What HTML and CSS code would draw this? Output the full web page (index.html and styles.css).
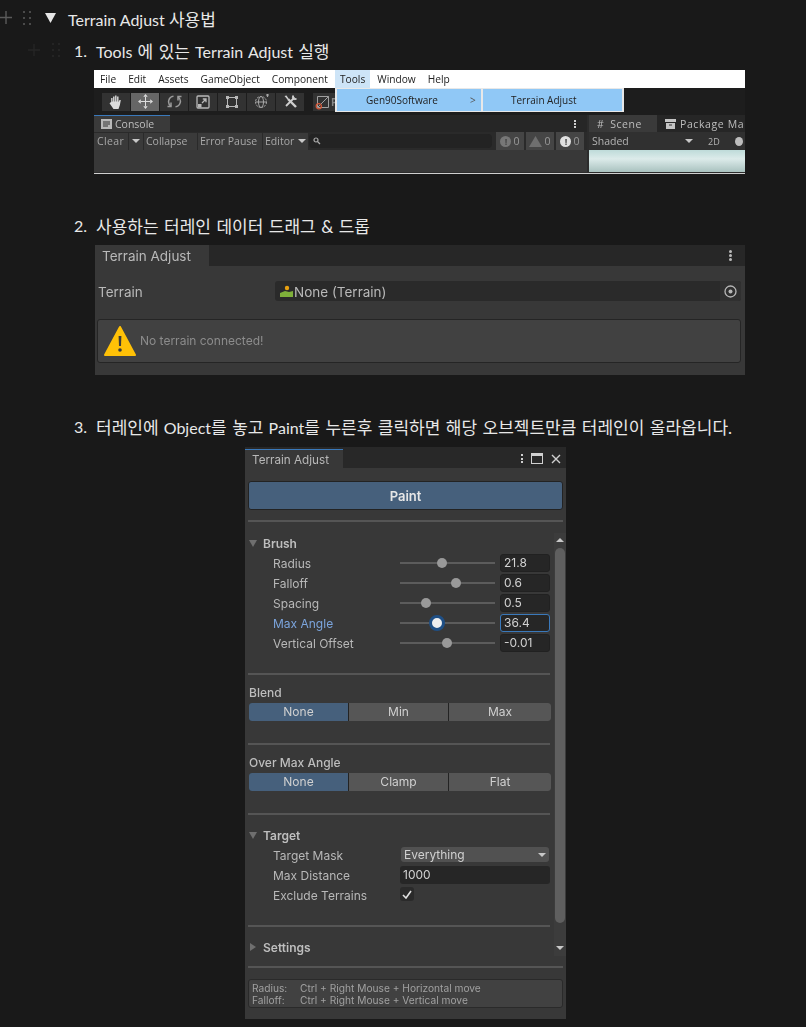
FILE: index.html
```html
<!DOCTYPE html>
<html lang="ko">

<head>
  <meta charset="UTF-8">
  <meta name="viewport" content="width=device-width, initial-scale=1.0">
  <title>Terrain Adjust 사용법</title>
  <link rel="stylesheet" href="styles.css">
</head>

<body>
  <div class="toggle-row">
    <svg class="handle-plus" width="14" height="14" viewBox="0 0 14 14"><path d="M6 0v13M0 6.500h12" stroke="#5a5a5a" stroke-width="1.400"/></svg>
    <svg class="handle-dots" width="10" height="14" viewBox="0 0 10 14" fill="#4a4a4a"><rect x="0" y="0" width="2" height="2"/><rect x="6" y="0" width="2" height="2"/><rect x="0" y="6" width="2" height="2"/><rect x="6" y="6" width="2" height="2"/><rect x="0" y="12" width="2" height="2"/><rect x="6" y="12" width="2" height="2"/></svg>
    <svg class="toggle-arrow" width="11" height="10" viewBox="0 0 11 10"><path d="M0 0h11L5.500 10z" fill="#e6e6e6"/></svg>
    <span class="toggle-title">Terrain Adjust <span class="ko">사용법</span></span>
  </div>

  <div class="step first">
    <svg class="ghost-plus" width="12" height="12" viewBox="0 0 12 12"><path d="M6 0v12M0 6h12" stroke="#262626" stroke-width="1.400"/></svg>
    <svg class="ghost-dots" width="8" height="14" viewBox="0 0 8 14" fill="#242424"><rect x="0" y="0" width="2" height="2"/><rect x="6" y="0" width="2" height="2"/><rect x="0" y="6" width="2" height="2"/><rect x="6" y="6" width="2" height="2"/><rect x="0" y="12" width="2" height="2"/><rect x="6" y="12" width="2" height="2"/></svg>
    <span class="step-num">1.</span>
    <span>Tools <span class="ko">에 있는</span> Terrain Adjust <span class="ko">실행</span></span>
  </div>

  <div class="shot-unity">
    <div class="menubar">
      <span>File</span><span>Edit</span><span>Assets</span><span>GameObject</span><span>Component</span>
      <span class="menu-active">Tools</span><span>Window</span><span>Help</span>
    </div>
    <div class="dropdown">
      <div class="dropdown-item left"><span>Gen90Software</span><i>&gt;</i></div>
      <div class="dropdown-item right">Terrain Adjust</div>
    </div>
    <div class="tools">
      <div class="tool-group">
        <span class="tool"><svg width="16" height="16" viewBox="0 0 16 16" fill="#dcdcdc"><path d="M3.200 8V4h1.300v3.500h.6V2.500h1.400v5h.6V1.500h1.400v6h.6V2.500h1.400v5.800l1-2.300h1.300l-.9 5L10.500 15H5.500L1.500 9.300l.9-.9z"/></svg></span>
        <span class="tool on"><svg width="17" height="17" viewBox="0 0 17 17" fill="none" stroke="#dedede"><path d="M8.500 4v9M4 8.500h9"/><path d="M8.500 1l2.200 2.800H6.300zM8.500 16l2.200-2.800H6.300zM1 8.500l2.800-2.200v4.400zM16 8.500l-2.800-2.200v4.400z" fill="#dedede" stroke="none"/></svg></span>
        <span class="tool"><svg width="15" height="15" viewBox="0 0 15 15" fill="none" stroke="#9c9c9c" stroke-width="1.500"><path d="M6.500 2.200A5.500 5.500 0 0 0 4 12.200M8.500 12.800A5.500 5.500 0 0 0 11 2.800"/><path d="M4 8.500v4H.5M11 6.500v-4h3.500"/></svg></span>
        <span class="tool"><svg width="14" height="14" viewBox="0 0 14 14" fill="none" stroke="#b8b8b8" stroke-width="1.300"><rect x="1" y="1" width="12" height="12" rx="1"/><path d="M6 8l3.500-3.500M6.800 4h3.200v3.200"/><rect x="2" y="9" width="3.500" height="3.500" fill="#b8b8b8" stroke="none"/></svg></span>
        <span class="tool"><svg width="14" height="14" viewBox="0 0 14 14" fill="#b8b8b8"><path d="M2.500 2.500h9v9h-9z" fill="none" stroke="#b8b8b8"/><rect x="1" y="1" width="3" height="3"/><rect x="10" y="1" width="3" height="3"/><rect x="1" y="10" width="3" height="3"/><rect x="10" y="10" width="3" height="3"/></svg></span>
        <span class="tool"><svg width="17" height="17" viewBox="0 0 17 17" fill="none" stroke="#a8a8a8"><circle cx="8" cy="9" r="5.500" stroke-dasharray="2 1"/><ellipse cx="8" cy="9" rx="2.500" ry="5.500"/><path d="M2.500 9h11"/><path d="M13 2h3M14.500 1v3" stroke-width="1.200"/></svg></span>
        <span class="tool"><svg width="15" height="15" viewBox="0 0 15 15" fill="none" stroke="#d0d0d0"><path d="M3 12L11 4" stroke-width="1.800"/><path d="M10 1.500a3 3 0 0 0 0 3.500 3 3 0 0 0 3.500 0L11.800 4.500 10.800 3z" fill="#d0d0d0" stroke-width="1"/><path d="M5 5l8 8" stroke-width="2.400"/><path d="M1.500 2l2-.5 2 3-1 1z" fill="#d0d0d0" stroke="none"/></svg></span>
      </div>
      <span class="tool pivot"><svg width="16" height="16" viewBox="0 0 16 16" fill="none"><path d="M2.500 2.500h11v11h-11zM2.500 13.500l11-11" stroke="#a0a0a0"/><circle cx="3.800" cy="12.200" r="2.600" stroke="#d2593a" stroke-width="1.300"/></svg><b>P</b></span>
    </div>
    <div class="docks">
      <div class="console">
        <div class="tabbar">
          <span class="tab console-tab"><svg width="11" height="10" viewBox="0 0 11 10"><path d="M0 0h11v10H0z" fill="#b8b8b8"/><path d="M2 3h7M2 5h7M2 7h5" stroke="#333"/></svg>Console</span>
          <span class="kebab small"><i></i><i></i><i></i></span>
        </div>
        <div class="console-tools">
          <span class="c-btn clear">Clear</span>
          <span class="c-btn caret-btn"><em class="caret"></em></span>
          <span class="c-btn collapse">Collapse</span>
          <span class="c-btn pause">Error Pause</span>
          <span class="c-btn editor">Editor<em class="caret"></em></span>
          <span class="search"><svg width="8" height="8" viewBox="0 0 8 8" fill="none" stroke="#aaa" stroke-width="1.200"><circle cx="3" cy="3" r="2"/><path d="M4.500 4.500L7 7"/></svg></span>
          <div class="counters">
            <span class="counter"><em class="badge grey">!</em>0</span>
            <span class="counter"><svg width="13" height="11" viewBox="0 0 13 11"><path d="M6.500 0L13 11H0z" fill="#6f6f6f"/></svg>0</span>
            <span class="counter"><em class="badge white">!</em>0</span>
          </div>
        </div>
        <div class="console-body"></div>
      </div>
      <div class="scene">
        <div class="tabbar">
          <span class="tab scene-tab"><b>#</b>Scene</span>
          <span class="package-tab"><svg width="11" height="10" viewBox="0 0 11 10"><path d="M0 0h11v3H0zM1 4h9v6H1z" fill="#c4c4c4"/><path d="M4 6h3" stroke="#333"/></svg>Package Ma</span>
        </div>
        <div class="scene-tools">
          <span class="shaded">Shaded</span><em class="caret"></em>
          <span class="two-d">2D</span>
          <span class="bulb"></span>
        </div>
        <div class="scene-view"></div>
      </div>
    </div>
  </div>

  <div class="step">
    <span class="step-num">2.</span>
    <span class="ko">사용하는 터레인 데이터 드래그 &amp; 드롭</span>
  </div>

  <div class="shot-connect">
    <div class="connect-head">
      <span class="connect-tab">Terrain Adjust</span>
      <span class="kebab round"><i></i><i></i><i></i></span>
    </div>
    <div class="connect-row">
      <span class="connect-label">Terrain</span>
      <div class="object-field">
        <svg width="13" height="12" viewBox="0 0 13 12"><circle cx="7" cy="3" r="2.200" fill="#e8a010"/><path d="M0 8l5-2 4 1 4-1v6H0z" fill="#7fb03a"/></svg>
        <span class="field-text">None (Terrain)</span>
        <span class="picker"><svg width="13" height="13" viewBox="0 0 13 13" fill="none" stroke="#b8b8b8" stroke-width="1.300"><circle cx="6.500" cy="6.500" r="5.500"/><circle cx="6.500" cy="6.500" r="2" fill="#b8b8b8" stroke="none"/></svg></span>
      </div>
    </div>
    <div class="warn-box">
      <svg width="32" height="32" viewBox="0 0 32 32"><path d="M16 2L31 30H1z" fill="#ffc107" stroke="#ffc107" stroke-width="2" stroke-linejoin="round"/><path d="M14.600 11h2.800l-.4 10h-2z" fill="#3a3a3a"/><circle cx="16" cy="25" r="1.800" fill="#3a3a3a"/></svg>
      <span class="warn-text">No terrain connected!</span>
    </div>
  </div>

  <div class="step">
    <span class="step-num">3.</span>
    <span><span class="ko">터레인에</span> Object<span class="ko">를 놓고</span> Paint<span class="ko">를 누른후 클릭하면 해당 오브젝트만큼 터레인이 올라옵니다.</span></span>
  </div>

  <div class="panel">
    <div class="panel-head">
      <span class="panel-tab">Terrain Adjust</span>
      <div class="panel-actions">
        <span class="kebab"><i></i><i></i><i></i></span>
        <span class="maximize"></span>
        <svg width="10" height="10" viewBox="0 0 10 10" stroke="#d0d0d0" stroke-width="1.400"><path d="M1 1l8 8M9 1l-8 8"/></svg>
      </div>
    </div>

    <div class="paint-wrap">
      <div class="paint-btn">Paint</div>
      <div class="rule"></div>
    </div>

    <div class="scroll-wrap">
      <div class="scroll-content">
        <div class="section-title brush"><em class="arrow-down"></em>Brush</div>
        <div class="prop"><span class="prop-label">Radius</span><div class="slider"><i class="knob" style="left:40%"></i></div><span class="num-field">21.8</span></div>
        <div class="prop"><span class="prop-label">Falloff</span><div class="slider"><i class="knob" style="left:55%"></i></div><span class="num-field">0.6</span></div>
        <div class="prop"><span class="prop-label">Spacing</span><div class="slider"><i class="knob" style="left:23%"></i></div><span class="num-field">0.5</span></div>
        <div class="prop focus"><span class="prop-label">Max Angle</span><div class="slider"><i class="knob" style="left:35%"></i></div><span class="num-field">36.4</span></div>
        <div class="prop"><span class="prop-label">Vertical Offset</span><div class="slider"><i class="knob" style="left:45%"></i></div><span class="num-field">-0.01</span></div>
        <div class="rule brush-rule"></div>

        <div class="plain-title">Blend</div>
        <div class="seg"><span class="on">None</span><span>Min</span><span>Max</span></div>
        <div class="rule sec-rule"></div>

        <div class="plain-title">Over Max Angle</div>
        <div class="seg"><span class="on">None</span><span>Clamp</span><span>Flat</span></div>
        <div class="rule sec-rule"></div>

        <div class="section-title target"><em class="arrow-down"></em>Target</div>
        <div class="prop"><span class="prop-label">Target Mask</span><div class="select">Everything<em class="caret"></em></div></div>
        <div class="prop"><span class="prop-label">Max Distance</span><div class="text-field">1000</div></div>
        <div class="prop"><span class="prop-label">Exclude Terrains</span><div class="check"><svg width="10" height="9" viewBox="0 0 10 9" fill="none" stroke="#e0e0e0" stroke-width="1.600"><path d="M1 5l3 3 5-7"/></svg></div></div>
        <div class="rule brush-rule"></div>

        <div class="section-title settings"><em class="arrow-right"></em>Settings</div>
      </div>
      <div class="scrollbar">
        <em class="sb-up"></em>
        <div class="sb-thumb"></div>
        <em class="sb-down"></em>
      </div>
    </div>

    <div class="panel-foot">
      <div class="rule"></div>
      <div class="hint">
        <div><span>Radius:</span>Ctrl + Right Mouse + Horizontal move</div>
        <div><span>Falloff:</span>Ctrl + Right Mouse + Vertical move</div>
      </div>
    </div>
  </div>
</body>

</html>
```

FILE: styles.css
```css
body {
  margin: 0;
  padding: 7px 0 0;
  background-color: #191919;
  color: #e8e8e8;
  font-family: Lato, "Noto Sans CJK KR", sans-serif;
  font-size: 16px;
  overflow: hidden;
}

/* hangul runs are a little wider than the latin next to them */
.ko {
  font-size: 17px;
}

/* heading toggle */
.toggle-row {
  display: flex;
  align-items: center;
  height: 24px;
  padding-bottom: 2px;
  box-sizing: border-box;
}

.handle-dots {
  margin-left: 9px;
}

.toggle-arrow {
  margin-left: 12px;
}

.toggle-title {
  margin-left: 12px;
}

.step {
  display: flex;
  align-items: center;
  height: 24px;
  margin-top: 40px;
  padding: 0 0 2px 74px;
  box-sizing: border-box;
  word-spacing: 1.100px;
}

.step.first {
  margin-top: 8px;
  padding-left: 28px;
}

.ghost-dots {
  margin-left: 12px;
  margin-right: 14px;
}

.step-num {
  width: 22px;
}

/* first screenshot */
.shot-unity {
  position: relative;
  width: 651px;
  height: 104px;
  margin: 7px 0 0 94px;
  background: #2c2c2c;
  border-bottom: 1px solid #cfcfcf;
  box-sizing: border-box;
  font-family: "Open Sans", sans-serif;
  overflow: hidden;
  filter: blur(0.35px);
}

.menubar {
  display: flex;
  gap: 12px;
  align-items: center;
  height: 18px;
  padding-left: 6px;
  background: #fff;
  color: #222;
  font-size: 10.200px;
}

.menu-active {
  margin: 0 -5px 0 -5px;
  padding: 0 5px;
  line-height: 18px;
  background: #cde4f7;
}

.dropdown {
  position: absolute;
  top: 18px;
  left: 241px;
  display: flex;
  gap: 2px;
  width: 289px;
  height: 24px;
  padding: 1px 2px;
  box-sizing: border-box;
  background: #e8e8e8;
  color: #222;
  font-size: 10px;
}

.dropdown-item {
  display: flex;
  align-items: center;
  background: #90c8f6;
}

.dropdown-item.left {
  width: 144px;
  padding-left: 29px;
  box-sizing: border-box;
}

.dropdown-item.left i {
  margin-left: 32px;
  font-style: normal;
  color: #555;
}

.dropdown-item.right {
  width: 139px;
  padding-left: 28px;
  box-sizing: border-box;
}

.tools {
  display: flex;
  align-items: center;
  gap: 9px;
  height: 27px;
  padding-left: 8px;
  background: #1d1d1d;
}

.tool-group {
  display: flex;
  gap: 1px;
}

.tool {
  display: flex;
  align-items: center;
  justify-content: center;
  width: 28px;
  height: 18px;
  background: #323232;
}

.tool.on {
  background: #666;
}

.tool.pivot {
  justify-content: flex-start;
  padding-left: 2px;
  color: #888;
  font-size: 10px;
}

.docks {
  display: flex;
  gap: 2px;
  height: 58px;
}

.console {
  width: 493px;
}

.scene {
  flex: 1;
  min-width: 0;
  overflow: hidden;
}

.tabbar {
  display: flex;
  align-items: center;
  height: 17px;
  background: #262626;
  color: #bdbdbd;
  font-size: 10.5px;
  white-space: nowrap;
}

.tab {
  display: flex;
  flex-shrink: 0;
  align-items: center;
  gap: 3px;
  height: 17px;
  background: #3a3a3a;
  box-sizing: border-box;
}

.console-tab {
  width: 76px;
  padding-left: 7px;
  border-top: 1px solid #3a79bb;
}

.scene-tab {
  width: 68px;
  padding-left: 8px;
  gap: 6px;
  letter-spacing: 0.5px;
}

.scene-tab b {
  font-weight: 400;
}

.package-tab {
  display: flex;
  flex-shrink: 0;
  align-items: center;
  gap: 4px;
  margin-left: 8px;
  letter-spacing: 0.6px;
}

.kebab {
  display: flex;
  flex-direction: column;
  gap: 2px;
}

.kebab i {
  width: 2px;
  height: 2px;
  background: #cfcfcf;
}

.kebab.small {
  margin-left: auto;
  margin-right: 11px;
  gap: 1px;
}

.kebab.round {
  gap: 1px;
}

.kebab.round i {
  width: 3px;
  height: 3px;
  border-radius: 50%;
  background: #bbb;
}

.console-tools {
  display: flex;
  align-items: center;
  height: 18px;
  background: #2a2a2a;
  color: #a8a8a8;
  font-size: 10.5px;
  white-space: nowrap;
}

.c-btn {
  display: flex;
  align-items: center;
  gap: 4px;
  height: 17px;
  padding-left: 2px;
  box-sizing: border-box;
  background: #3a3a3a;
  border-right: 1px solid #2a2a2a;
}

.clear {
  width: 35px;
  padding-left: 3px;
  letter-spacing: 0.4px;
}

.caret-btn {
  width: 15px;
  justify-content: center;
  padding-left: 0;
}

.collapse {
  width: 54px;
}

.pause {
  width: 65px;
}

.editor {
  width: 46px;
}

.caret {
  display: inline-block;
  width: 0;
  height: 0;
  border-left: 4px solid transparent;
  border-right: 4px solid transparent;
  border-top: 4px solid #c8c8c8;
}

.search {
  display: flex;
  align-items: center;
  width: 183px;
  height: 14px;
  padding-left: 4px;
  box-sizing: border-box;
  background: #232323;
  border-radius: 4px;
}

.counters {
  display: flex;
  gap: 2px;
  margin-left: 4px;
}

.counter {
  display: flex;
  align-items: center;
  justify-content: center;
  gap: 2px;
  width: 28px;
  height: 18px;
  background: #454545;
  color: #999;
}

.badge {
  width: 11px;
  height: 11px;
  border-radius: 50%;
  font-size: 9px;
  font-style: normal;
  font-weight: 700;
  line-height: 11px;
  text-align: center;
  color: #454545;
}

.badge.grey {
  background: #777;
}

.badge.white {
  background: #e0e0e0;
}

.console-body {
  height: 22px;
  background: #383838;
}

.scene-tools {
  display: flex;
  align-items: center;
  height: 18px;
  padding-left: 3px;
  background: #303030;
  color: #b4b4b4;
  font-size: 10.5px;
}

.shaded {
  width: 93px;
}

.two-d {
  margin-left: 15px;
  font-size: 9px;
}

.bulb {
  width: 8px;
  height: 9px;
  margin-left: 15px;
  border-radius: 50%;
  background: #bdbdbd;
}

.scene-view {
  height: 22px;
  background: linear-gradient(#bedbd9, #dcebea 40%, #a9c2bf);
}

/* second screenshot */
.shot-connect {
  width: 650px;
  height: 130px;
  margin: 7px 0 0 95px;
  background: #383838;
  color: #b9b9b9;
  font-family: Inter, sans-serif;
  filter: blur(0.35px);
}

.connect-head {
  display: flex;
  align-items: center;
  justify-content: space-between;
  height: 21px;
  padding-right: 13px;
  background: #272727;
}

.connect-tab {
  width: 114px;
  padding: 1px 0 0 7px;
  box-sizing: border-box;
  line-height: 20px;
  background: #383838;
  font-size: 13.5px;
}

.connect-row {
  display: flex;
  align-items: center;
  height: 20px;
  margin-top: 15px;
  padding-left: 3px;
  padding-right: 4px;
}

.connect-label {
  width: 177px;
  padding-top: 1px;
  font-size: 13.5px;
}

.object-field {
  display: flex;
  flex: 1;
  align-items: center;
  gap: 1px;
  height: 20px;
  padding-left: 5px;
  box-sizing: border-box;
  background: #2a2a2a;
  border-radius: 3px;
  font-size: 13.5px;
}

.field-text {
  padding-top: 2px;
}

.picker {
  display: flex;
  align-items: center;
  justify-content: center;
  width: 21px;
  height: 20px;
  margin-left: auto;
  background: #303030;
  border-radius: 0 3px 3px 0;
}

.warn-box {
  display: flex;
  align-items: center;
  gap: 4px;
  width: 644px;
  height: 44px;
  margin: 18px 0 0 2px;
  padding-left: 6px;
  box-sizing: border-box;
  background: #414141;
  border: 1px solid #252525;
  border-radius: 3px;
  color: #8c8c8c;
  font-size: 12px;
}

.warn-text {
  padding-bottom: 2px;
}

/* third screenshot */
.panel {
  display: flex;
  flex-direction: column;
  width: 321px;
  height: 572px;
  margin: 8px 0 0 245px;
  background: #383838;
  color: #b8b8b8;
  font-family: Inter, sans-serif;
  font-size: 12px;
  filter: blur(0.3px);
}

.panel-head {
  display: flex;
  justify-content: space-between;
  height: 21px;
  padding-top: 2px;
  box-sizing: border-box;
  background: #282828;
}

.panel-tab {
  width: 98px;
  padding-left: 7px;
  box-sizing: border-box;
  border-top: 1px solid #3a79bb;
  background: #383838;
  font-size: 11.700px;
  line-height: 20px;
}

.panel-actions {
  display: flex;
  align-items: center;
  gap: 8px;
  padding-right: 5px;
}

.panel-actions .kebab {
  gap: 1.500px;
}

.maximize {
  width: 10px;
  height: 7px;
  border: 1px solid #d0d0d0;
  border-top-width: 3px;
}

.paint-wrap {
  padding: 13px 3px 0;
}

.paint-btn {
  height: 29px;
  background: #46607c;
  border: 1px solid #232323;
  border-radius: 3px;
  box-sizing: border-box;
  color: #e6e6e6;
  font-size: 13px;
  font-weight: 600;
  line-height: 29px;
  text-align: center;
}

.rule {
  height: 2px;
  background: #555;
}

.paint-wrap .rule {
  margin-top: 10px;
}

.scroll-wrap {
  display: flex;
  height: 444px;
}

.scroll-content {
  width: 309px;
  padding-left: 4px;
  box-sizing: border-box;
}

.section-title {
  display: flex;
  align-items: center;
  gap: 6px;
  height: 16px;
  color: #bebebe;
  font-weight: 600;
}

.section-title.brush {
  margin-top: 13px;
  margin-bottom: 2px;
}

.section-title.target {
  margin-top: 12px;
  margin-bottom: 2px;
}

.section-title.settings {
  margin-top: 12px;
}

.arrow-down {
  width: 0;
  height: 0;
  border-left: 4px solid transparent;
  border-right: 4px solid transparent;
  border-top: 7px solid #6f6f6f;
}

.arrow-right {
  width: 0;
  height: 0;
  margin-left: 1px;
  margin-right: 1px;
  border-top: 4px solid transparent;
  border-bottom: 4px solid transparent;
  border-left: 6px solid #6f6f6f;
}

.prop {
  display: flex;
  align-items: center;
  height: 20px;
  padding-left: 24px;
}

.prop-label {
  width: 127px;
}

.slider {
  position: relative;
  width: 95px;
  height: 2px;
  background: #5c5c5c;
}

.knob {
  position: absolute;
  top: -4px;
  width: 10px;
  height: 10px;
  margin-left: -1px;
  border-radius: 50%;
  background: #999;
}

.num-field {
  width: 50px;
  height: 18px;
  margin-left: 5px;
  padding-left: 3px;
  box-sizing: border-box;
  background: #262626;
  border: 1px solid #212121;
  border-radius: 3px;
  color: #d2d2d2;
  line-height: 16px;
}

.focus .prop-label {
  color: #7ba4dc;
}

.focus .knob {
  top: -6px;
  width: 10px;
  height: 10px;
  border: 2px solid #1f4f85;
  outline: 2px solid #1f4f85;
  outline-offset: -1px;
  background: #eee;
  margin-left: -3px;
}

.focus .num-field {
  border-color: #3a79bb;
}

.brush-rule {
  width: 302px;
  margin: 20px 0 0 -1px;
}

.sec-rule {
  width: 302px;
  margin: 22px 0 0 -1px;
}

.plain-title {
  height: 16px;
  margin-top: 10px;
  color: #bebebe;
  font-weight: 500;
}

.seg {
  display: grid;
  grid-template-columns: 99px 99px 102px;
  gap: 1px;
  width: 302px;
  height: 18px;
  margin-top: 2px;
  background: #232323;
  border-radius: 3px;
  overflow: hidden;
  text-align: center;
  line-height: 18px;
}

.seg span {
  background: #565656;
  color: #d0d0d0;
}

.seg .on {
  background: #46607c;
}

.select {
  display: flex;
  align-items: center;
  justify-content: space-between;
  width: 148px;
  height: 15px;
  margin: -1px 0 0 1px;
  padding: 0 3px;
  box-sizing: border-box;
  background: #515151;
  border-radius: 3px;
  color: #d0d0d0;
}

.text-field {
  width: 150px;
  height: 18px;
  padding-left: 3px;
  box-sizing: border-box;
  background: #262626;
  border-radius: 3px;
  color: #d2d2d2;
  line-height: 18px;
}

.check {
  display: flex;
  align-items: center;
  justify-content: center;
  width: 14px;
  height: 14px;
  margin-top: -2px;
  background: #2a2a2a;
  border-radius: 3px;
}

.scrollbar {
  display: flex;
  flex-direction: column;
  align-items: center;
  width: 12px;
  height: 423px;
  margin-top: 11px;
  background: #3c3c3c;
}

.sb-up,
.sb-down {
  width: 0;
  height: 0;
  border-left: 4px solid transparent;
  border-right: 4px solid transparent;
}

.sb-up {
  margin-top: 5px;
  border-bottom: 4px solid #c8c8c8;
}

.sb-down {
  margin-top: 23px;
  border-top: 4px solid #c8c8c8;
}

.sb-thumb {
  flex-shrink: 0;
  width: 10px;
  height: 375px;
  margin-top: 6px;
  background: #5f5f5f;
  border-radius: 5px;
}

.panel-foot {
  padding: 0 3px;
}

.hint {
  height: 29px;
  margin-top: 11px;
  padding: 2px 3px;
  box-sizing: border-box;
  background: #414141;
  border: 1px solid #2a2a2a;
  border-radius: 3px;
  color: #a0a0a0;
  font-size: 10.200px;
  line-height: 12px;
}

.hint span {
  display: inline-block;
  width: 48px;
}
```
